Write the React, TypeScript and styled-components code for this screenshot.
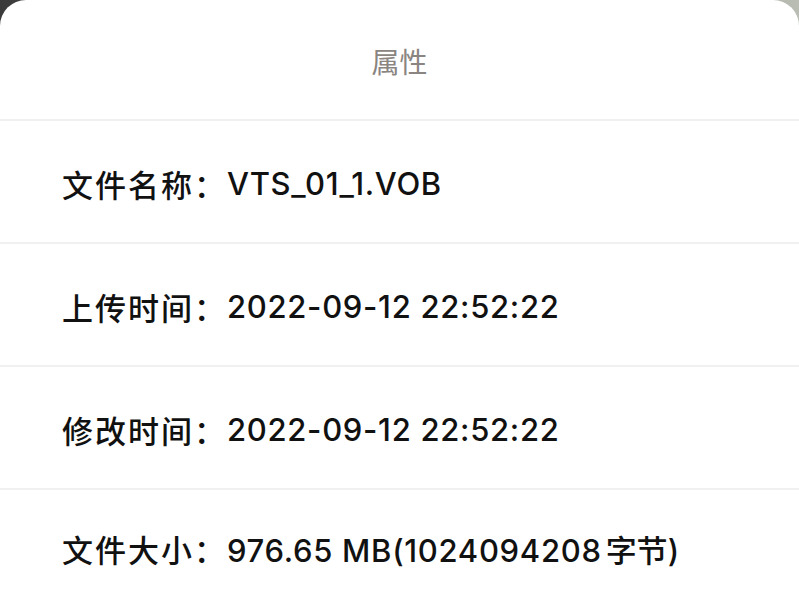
import React from "react";
import styled, { createGlobalStyle } from "styled-components";

const Global = createGlobalStyle`
  html, body { margin: 0; padding: 0; }
  body {
    width: 799px;
    height: 605px;
    overflow: hidden;
    background: linear-gradient(90deg, #3a3a3a 0%, #6b6b6b 40%, #b9bdb3 100%);
    font-family: "Inter", "Noto Sans CJK SC", sans-serif;
  }
`;

const Sheet = styled.div`
  width: 799px;
  height: 605px;
  background: #ffffff;
  border-radius: 26px 26px 0 0;
  display: flex;
  flex-direction: column;
  overflow: hidden;
`;

const Header = styled.div`
  height: 119px;
  display: flex;
  align-items: center;
  justify-content: center;
  border-bottom: 2px solid #f0f0f0;
  flex-shrink: 0;
`;

const Title = styled.div`
  font-family: "Noto Sans CJK SC", sans-serif;
  font-size: 28px;
  color: #8a8581;
  margin-top: 2px;
`;

const Row = styled.div<{ $last?: boolean }>`
  height: ${(p) => (p.$last ? "auto" : "123px")};
  flex-shrink: 0;
  display: flex;
  align-items: center;
  padding-left: 62px;
  padding-top: 4px;
  box-sizing: border-box;
  border-bottom: ${(p) => (p.$last ? "none" : "2px solid #f0f0f0")};
  ${(p) => (p.$last ? "flex: 1; padding-bottom: 2px;" : "")}
`;

const Label = styled.span`
  font-family: "Noto Sans CJK SC", sans-serif;
  font-size: 31px;
  font-weight: 500;
  color: #111111;
  letter-spacing: 2px;
`;

const Value = styled.span`
  font-family: "Inter", "Noto Sans CJK SC", sans-serif;
  font-size: 31px;
  font-weight: 500;
  color: #111111;
  letter-spacing: 0.7px;
`;

const Unit = styled.span`
  font-family: "Noto Sans CJK SC", sans-serif;
  font-size: 31px;
  margin-left: 4px;
  letter-spacing: 0;
`;

type RowData = { label: string; value: string; unit?: string; tail?: string };

const rows: RowData[] = [
  { label: "文件名称：", value: "VTS_01_1.VOB" },
  { label: "上传时间：", value: "2022-09-12 22:52:22" },
  { label: "修改时间：", value: "2022-09-12 22:52:22" },
  { label: "文件大小：", value: "976.65 MB(1024094208", unit: "字节", tail: ")" },
];

export default function App() {
  return (
    <>
      <Global />
      <Sheet>
        <Header>
          <Title>属性</Title>
        </Header>
        {rows.map((r, i) => (
          <Row key={r.label} $last={i === rows.length - 1}>
            <Label>{r.label}</Label>
            <Value>
              {r.value}
              {r.unit && <Unit>{r.unit}</Unit>}
              {r.tail}
            </Value>
          </Row>
        ))}
      </Sheet>
    </>
  );
}
